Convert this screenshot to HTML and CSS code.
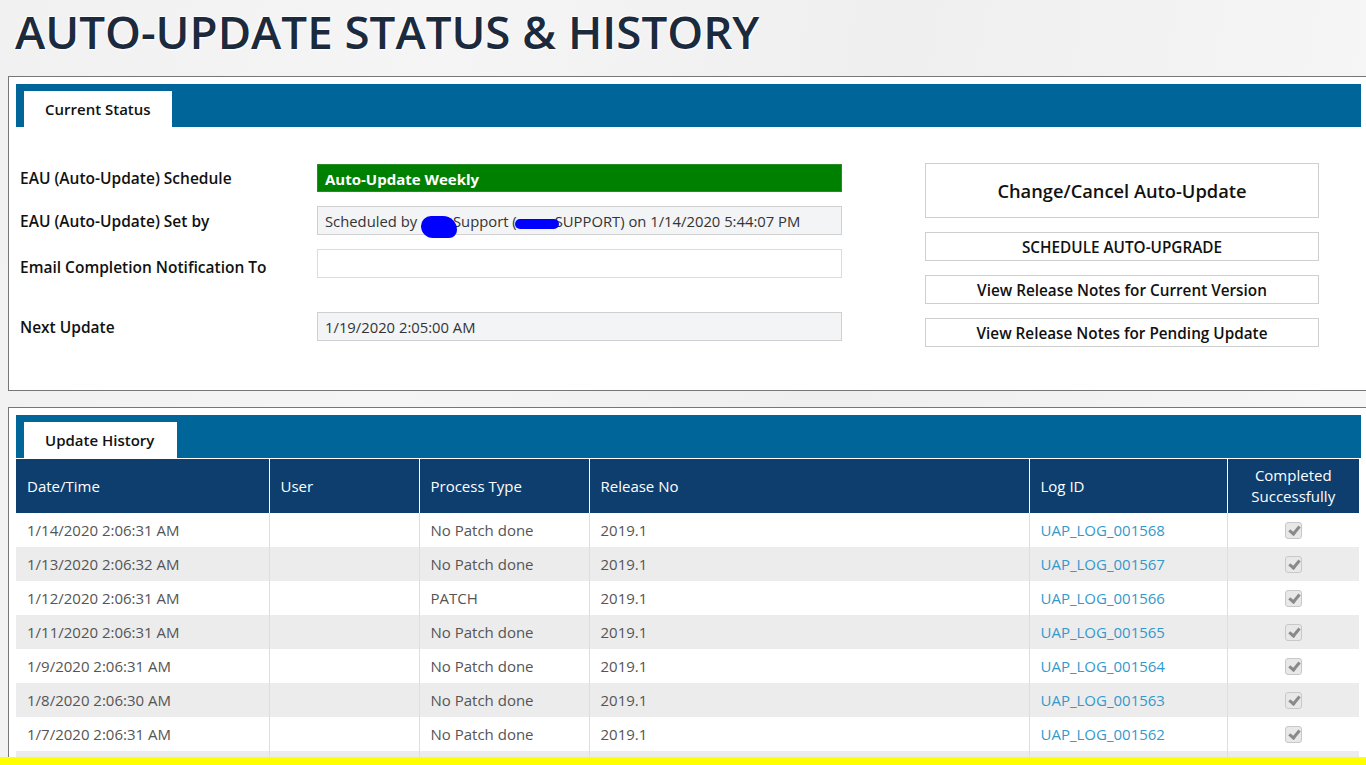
FILE: index.html
```html
<!DOCTYPE html>
<html>
<head>
<meta charset="utf-8">
<link rel="stylesheet" href="styles.css">
</head>
<body>
<h1 class="page-title">AUTO-UPDATE STATUS &amp; HISTORY</h1>

<section class="panel panel-status">
  <div class="tabbar"><div class="tab">Current Status</div></div>
  <div class="status-body">
    <div class="form">
      <div class="row row-schedule">
        <div class="label">EAU (Auto-Update) Schedule</div>
        <div class="field field-green">Auto-Update Weekly</div>
      </div>
      <div class="row">
        <div class="label">EAU (Auto-Update) Set by</div>
        <div class="field field-ro">Scheduled by <span class="redact redact-a"></span>Support (<span class="redact redact-b"></span>SUPPORT) on 1/14/2020 5:44:07 PM</div>
      </div>
      <div class="row row-email">
        <div class="label">Email Completion Notification To</div>
        <div class="field field-empty"></div>
      </div>
      <div class="row">
        <div class="label">Next Update</div>
        <div class="field field-ro">1/19/2020 2:05:00 AM</div>
      </div>
    </div>
    <div class="actions">
      <button class="btn btn-big">Change/Cancel Auto-Update</button>
      <button class="btn">SCHEDULE AUTO-UPGRADE</button>
      <button class="btn">View Release Notes for Current Version</button>
      <button class="btn">View Release Notes for Pending Update</button>
    </div>
  </div>
</section>

<section class="panel panel-history">
  <div class="tabbar"><div class="tab tab-history">Update History</div></div>
  <table class="history">
    <colgroup>
      <col class="c1"><col class="c2"><col class="c3"><col class="c4"><col class="c5"><col class="c6">
    </colgroup>
    <thead>
      <tr>
        <th>Date/Time</th><th>User</th><th>Process Type</th><th>Release No</th><th>Log ID</th><th class="center">Completed<br>Successfully</th>
      </tr>
    </thead>
    <tbody>
      <tr><td>1/14/2020 2:06:31 AM</td><td></td><td>No Patch done</td><td>2019.1</td><td><a href="#">UAP_LOG_001568</a></td><td class="center"><span class="chk"></span></td></tr>
      <tr><td>1/13/2020 2:06:32 AM</td><td></td><td>No Patch done</td><td>2019.1</td><td><a href="#">UAP_LOG_001567</a></td><td class="center"><span class="chk"></span></td></tr>
      <tr><td>1/12/2020 2:06:31 AM</td><td></td><td>PATCH</td><td>2019.1</td><td><a href="#">UAP_LOG_001566</a></td><td class="center"><span class="chk"></span></td></tr>
      <tr><td>1/11/2020 2:06:31 AM</td><td></td><td>No Patch done</td><td>2019.1</td><td><a href="#">UAP_LOG_001565</a></td><td class="center"><span class="chk"></span></td></tr>
      <tr><td>1/9/2020 2:06:31 AM</td><td></td><td>No Patch done</td><td>2019.1</td><td><a href="#">UAP_LOG_001564</a></td><td class="center"><span class="chk"></span></td></tr>
      <tr><td>1/8/2020 2:06:30 AM</td><td></td><td>No Patch done</td><td>2019.1</td><td><a href="#">UAP_LOG_001563</a></td><td class="center"><span class="chk"></span></td></tr>
      <tr><td>1/7/2020 2:06:31 AM</td><td></td><td>No Patch done</td><td>2019.1</td><td><a href="#">UAP_LOG_001562</a></td><td class="center"><span class="chk"></span></td></tr>
      <tr class="row-tail"><td></td><td></td><td></td><td></td><td></td><td></td></tr>
    </tbody>
  </table>
</section>

<div class="yellow-strip"></div>
</body>
</html>
```

FILE: styles.css
```css
html, body {
  margin: 0;
  padding: 0;
  overflow: hidden;
  height: 765px;
}
body {
  font-family: "Open Sans", "Liberation Sans", sans-serif;
  background: linear-gradient(100deg, #f1f1f1 0%, #f5f5f5 30%, #efefef 60%, #f7f7f7 100%);
  color: #222;
}
.page-title {
  margin: 0;
  padding: 0 0 16px 15px;
  font-size: 45.7px;
  line-height: 62px;
  font-weight: 600;
  color: #1c2a3d;
  text-shadow: 1px 1px 2px #ffffff, -1px -1px 1px #ffffff;
  height: 60px;
}
.panel {
  margin-left: 8px;
  width: 1345px;
  padding: 7px;
  background: #fff;
  border: 1px solid #777;
}
.panel-history {
  margin-top: 16px;
}
.tabbar {
  background: #006699;
  height: 43px;
  display: flex;
  align-items: flex-end;
  padding-left: 8px;
}
.tab {
  background: #fff;
  height: 36px;
  line-height: 37px;
  padding: 0 21px;
  font-size: 15px;
  font-weight: 600;
  color: #111;
}
.tab-history {
  padding: 0 23px 0 21px;
}
.status-body {
  display: flex;
  padding: 37px 0 36px 4px;
}
.form {
  display: flex;
  flex-direction: column;
  gap: 14px;
}
.row {
  display: grid;
  grid-template-columns: 297px 525px;
  align-items: center;
}
.row-email {
  margin-bottom: 20px;
}
.row-email .label {
  position: relative;
  top: 3px;
}
.label {
  font-size: 15.5px;
  font-weight: 600;
  color: #111;
}
.field {
  box-sizing: border-box;
  height: 29px;
  border: 1px solid #d0d0d0;
  padding: 0 7px;
  font-size: 14.8px;
  line-height: 28px;
  color: #333;
  white-space: nowrap;
}
.field-green {
  background: #008000;
  border-color: #2a8a2a;
  color: #fff;
  font-weight: 700;
  height: 28px;
  line-height: 29px;
  font-size: 15px;
}
.field-ro {
  background: #f3f4f6;
}
.field-empty {
  background: #fff;
  border-color: #dcdcdc;
}
.redact {
  display: inline-block;
  background: #0000ff;
  vertical-align: middle;
  position: relative;
}
.redact-a {
  width: 36px;
  height: 22px;
  border-radius: 10px 14px 8px 12px;
  margin: 4px -4px 0 0;
  top: 2px;
}
.redact-b {
  width: 44px;
  height: 10px;
  border-radius: 6px;
  margin: 0 -4px 0 -2px;
  top: 1px;
}
.actions {
  margin-left: 83px;
  width: 394px;
  display: flex;
  flex-direction: column;
  gap: 14px;
  margin-top: -1px;
}
.btn {
  box-sizing: border-box;
  height: 29px;
  background: #fff;
  border: 1px solid #cfcfcf;
  font-family: "Open Sans", "Liberation Sans", sans-serif;
  font-size: 15.3px;
  font-weight: 600;
  color: #111;
  padding: 0;
  cursor: pointer;
}
.btn-big {
  height: 55px;
  font-size: 18.3px;
}
.history {
  border-collapse: collapse;
  width: 1343px;
  table-layout: fixed;
  margin-top: 1px;
  font-size: 15px;
}
.c1 { width: 253px; }
.c2 { width: 150px; }
.c3 { width: 170px; }
.c4 { width: 440px; }
.c5 { width: 198px; }
.c6 { width: 132px; }
.history th {
  background: #0e3e6e;
  color: #fff;
  font-weight: 400;
  text-align: left;
  height: 54px;
  padding: 0 11px;
  border-left: 1px solid #fff;
  line-height: 21px;
  box-sizing: border-box;
}
.history th:first-child {
  border-left: none;
}
.history td {
  height: 34px;
  padding: 0 11px;
  color: #555;
  border-left: 1px solid #dedede;
  box-sizing: border-box;
}
.history td:first-child {
  border-left: none;
}
.history tbody tr:nth-child(even) td {
  background: #ececec;
}
.history .center {
  text-align: center;
}
.history a {
  color: #3399cc;
  text-decoration: none;
}
.chk {
  display: inline-block;
  width: 15px;
  height: 15px;
  border: 1px solid #c8c8c8;
  border-radius: 3px;
  background: #e8e8e8;
  vertical-align: middle;
  position: relative;
  top: -1px;
}
.chk::after {
  content: "";
  position: absolute;
  left: 5px;
  top: 1px;
  width: 4px;
  height: 8px;
  border: solid #8a8a8a;
  border-width: 0 3px 3px 0;
  transform: rotate(40deg);
}
.yellow-strip {
  position: fixed;
  left: 0;
  right: 0;
  bottom: 0;
  height: 8px;
  background: #ffff00;
}
```
